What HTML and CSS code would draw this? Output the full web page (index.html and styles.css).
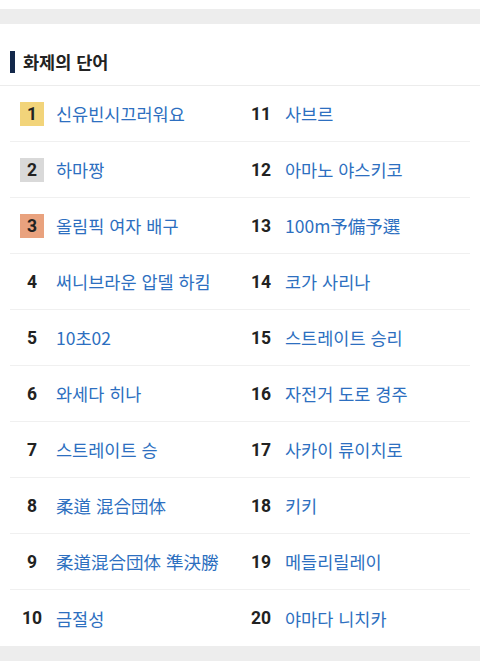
FILE: index.html
```html
<!DOCTYPE html>
<html lang="ko">
<head>
<meta charset="utf-8">
<link rel="stylesheet" href="styles.css">
</head>
<body>
<div class="gap-top"></div>
<section class="card">
  <h2 class="title"><span class="bar"></span>화제의 단어</h2>
  <ul class="list">
    <li class="row"><div class="item"><span class="num rank1">1</span><a class="word">신유빈시끄러워요</a></div><div class="item"><span class="num">11</span><a class="word">사브르</a></div></li>
    <li class="row"><div class="item"><span class="num rank2">2</span><a class="word">하마짱</a></div><div class="item"><span class="num">12</span><a class="word">아마노 야스키코</a></div></li>
    <li class="row"><div class="item"><span class="num rank3">3</span><a class="word">올림픽 여자 배구</a></div><div class="item"><span class="num">13</span><a class="word">100m予備予選</a></div></li>
    <li class="row"><div class="item"><span class="num">4</span><a class="word">써니브라운 압델 하킴</a></div><div class="item"><span class="num">14</span><a class="word">코가 사리나</a></div></li>
    <li class="row"><div class="item"><span class="num">5</span><a class="word">10초02</a></div><div class="item"><span class="num">15</span><a class="word">스트레이트 승리</a></div></li>
    <li class="row"><div class="item"><span class="num">6</span><a class="word">와세다 히나</a></div><div class="item"><span class="num">16</span><a class="word">자전거 도로 경주</a></div></li>
    <li class="row"><div class="item"><span class="num">7</span><a class="word">스트레이트 승</a></div><div class="item"><span class="num">17</span><a class="word">사카이 류이치로</a></div></li>
    <li class="row"><div class="item"><span class="num">8</span><a class="word">柔道 混合団体</a></div><div class="item"><span class="num">18</span><a class="word">키키</a></div></li>
    <li class="row"><div class="item"><span class="num">9</span><a class="word">柔道混合団体 準決勝</a></div><div class="item"><span class="num">19</span><a class="word">메들리릴레이</a></div></li>
    <li class="row"><div class="item"><span class="num">10</span><a class="word">금절성</a></div><div class="item"><span class="num">20</span><a class="word">야마다 니치카</a></div></li>
  </ul>
</section>
<div class="gap-bottom"></div>
</body>
</html>
```
FILE: styles.css
```css
* { box-sizing: border-box; }
html, body { margin: 0; padding: 0; background: #fff; }
body {
  font-family: "Noto Sans CJK KR", "Noto Sans", sans-serif;
  padding-top: 9px;
}
.gap-top, .gap-bottom { height: 15px; background: #ededed; }
.card { background: #fff; }
.title {
  margin: 0;
  height: 62px;
  display: flex;
  align-items: flex-end;
  gap: 8px;
  padding: 0 0 12px 10px;
  font-size: 17.5px;
  line-height: 22px;
  font-weight: 700;
  color: #222;
  border-bottom: 1px solid #ececec;
}
.bar { width: 5px; height: 22px; background: #13284a; display: block; }
.list { list-style: none; margin: 0; padding: 0 10px; }
.row {
  display: grid;
  grid-template-columns: 229px 1fr;
  height: 56px;
  padding-left: 10px;
  border-bottom: 1px solid #f0f0f0;
  align-items: center;
}
.row:last-child { border-bottom: none; }
.item { display: flex; align-items: center; gap: 12px; }
.num {
  width: 24px;
  height: 24px;
  display: flex;
  align-items: center;
  justify-content: center;
  font-family: Roboto, "Noto Sans", sans-serif;
  font-weight: 700;
  font-size: 17.5px;
  color: #222;
}
.rank1 { background: #f2d47a; }
.rank2 { background: #d9d9d9; }
.rank3 { background: #e9a27e; }
.word {
  font-size: 17.5px;
  color: #2d6fc0;
  text-decoration: none;
  white-space: nowrap;
}
```
